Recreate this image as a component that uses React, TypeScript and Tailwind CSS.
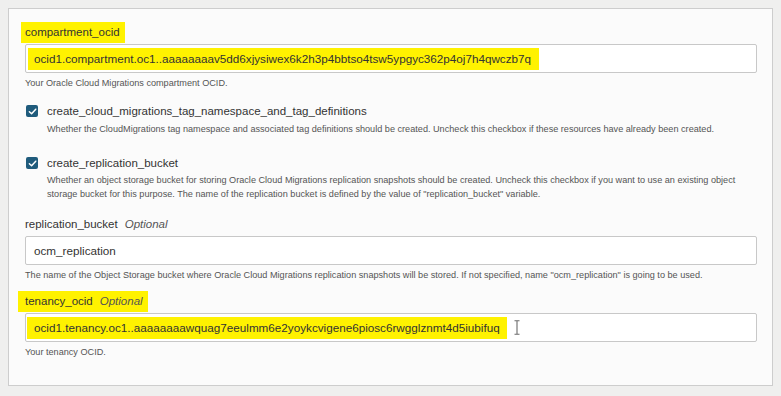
import React from "react";

const font = { fontFamily: '"Liberation Sans", Arial, sans-serif' };

function Check() {
  return (
    <span className="flex h-[12px] w-[12px] shrink-0 items-center justify-center rounded-[2px] bg-[#1f5b7c]">
      <svg width="9" height="9" viewBox="0 0 10 10" fill="none">
        <path d="M1.5 5.2 L4 7.6 L8.6 2.4" stroke="#fff" strokeWidth="1.6" strokeLinecap="round" strokeLinejoin="round" />
      </svg>
    </span>
  );
}

function Help({ children, className = "" }: { children: React.ReactNode; className?: string }) {
  return <p className={"text-[9.15px] leading-[14px] text-[#555] " + className}>{children}</p>;
}

export default function App() {
  return (
    <div className="h-[396px] w-[781px] bg-[#efefee] pl-[8px] pt-[8px]" style={font}>
      <div className="flex h-[378px] w-[765px] flex-col border border-[#cdcdcd] bg-[#fbfbfb] pl-[16px] pr-[15px]">
        {/* compartment_ocid */}
        <div className="mt-[13px] flex h-[21px]">
          <span className="-ml-[4px] bg-[#fff200] pl-[4px] pr-[5px] text-[11.5px] leading-[21px] text-[#333]">
            compartment_ocid
          </span>
        </div>
        <div className="mt-[1px] flex h-[29px] items-center rounded-[2px] border border-[#c8c8c8] bg-white pl-[2px]">
          <span className="bg-[#fff200] pl-[6px] pr-[8px] text-[11.7px] leading-[22px] text-[#333]">
            ocid1.compartment.oc1..aaaaaaaav5dd6xjysiwex6k2h3p4bbtso4tsw5ypgyc362p4oj7h4qwczb7q
          </span>
        </div>
        <Help className="mt-[3px]">Your Oracle Cloud Migrations compartment OCID.</Help>

        {/* checkbox 1 */}
        <div className="mt-[13px] flex h-[16px] items-center">
          <span className="ml-[1px]">
            <Check />
          </span>
          <span className="ml-[9px] text-[11.5px] leading-[16px] text-[#333]">
            create_cloud_migrations_tag_namespace_and_tag_definitions
          </span>
        </div>
        <Help className="mt-[3px] pl-[22px]">
          Whether the CloudMigrations tag namespace and associated tag definitions should be created. Uncheck this
          checkbox if these resources have already been created.
        </Help>

        {/* checkbox 2 */}
        <div className="mt-[19px] flex h-[16px] items-center">
          <span className="ml-[1px]">
            <Check />
          </span>
          <span className="ml-[9px] text-[11.5px] leading-[16px] text-[#333]">create_replication_bucket</span>
        </div>
        <Help className="mt-[2px] pl-[22px]">
          Whether an object storage bucket for storing Oracle Cloud Migrations replication snapshots should be created.
          Uncheck this checkbox if you want to use an existing object
          <br />
          storage bucket for this purpose. The name of the replication bucket is defined by the value of
          "replication_bucket" variable.
        </Help>

        {/* replication_bucket */}
        <div className="mt-[13px] flex h-[21px] items-center text-[11.5px] leading-[21px]">
          <span className="text-[#333]">replication_bucket</span>
          <span className="ml-[7px] italic text-[#555]">Optional</span>
        </div>
        <div className="mt-[1px] flex h-[29px] items-center rounded-[2px] border border-[#c8c8c8] bg-white pl-[8px]">
          <span className="text-[11.7px] text-[#333]">ocm_replication</span>
        </div>
        <Help className="mt-[3px]">
          The name of the Object Storage bucket where Oracle Cloud Migrations replication snapshots will be stored. If
          not specified, name "ocm_replication" is going to be used.
        </Help>

        {/* tenancy_ocid */}
        <div className="mt-[9px] flex h-[21px]">
          <span className="-ml-[7px] flex items-center bg-[#fff200] pl-[7px] pr-[5px] text-[11.5px] leading-[21px]">
            <span className="text-[#333]">tenancy_ocid</span>
            <span className="ml-[7px] italic text-[#555]">Optional</span>
          </span>
        </div>
        <div className="mt-[1px] flex h-[29px] items-center rounded-[2px] border border-[#c8c8c8] bg-white pl-[1px]">
          <span className="bg-[#fff200] pl-[7px] pr-[7px] text-[11.7px] leading-[22px] text-[#333]">
            ocid1.tenancy.oc1..aaaaaaaawquag7eeulmm6e2yoykcvigene6piosc6rwgglznmt4d5iubifuq
          </span>
          <svg className="ml-[7px]" width="6" height="15" viewBox="0 0 6 15" fill="none">
            <path d="M0.5 0.8 H5.5 M3 0.8 V14.2 M0.5 14.2 H5.5" stroke="#6b6b6b" strokeWidth="1.1" />
          </svg>
        </div>
        <Help className="mt-[3px]">Your tenancy OCID.</Help>
      </div>
    </div>
  );
}
